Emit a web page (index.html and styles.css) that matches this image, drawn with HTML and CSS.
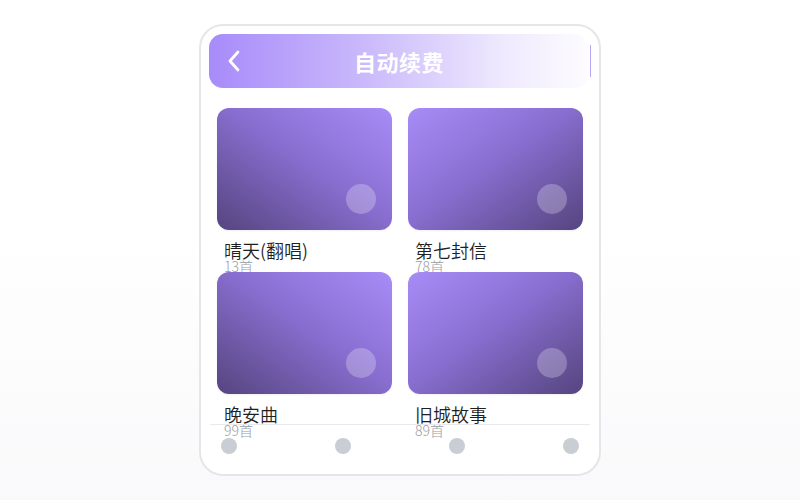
FILE: index.html
```html
<!DOCTYPE html>
<html lang="zh-CN">
<head>
  <meta charset="UTF-8" />
  <meta name="viewport" content="width=device-width, initial-scale=1.0"/>
  <title>自动续费</title>
  <link rel="stylesheet" href="styles.css">
</head>
<body>
  <div class="phone">
    <div class="header">
      <button class="back-btn" title="返回">
        <svg width="14" height="22" viewBox="0 0 14 22"><path d="M11 2 L3 11 L11 20" fill="none" stroke="#fff" stroke-width="2.8" stroke-linecap="round" stroke-linejoin="round"/></svg>
      </button>
      <div class="title">自动续费</div>
    </div>

    <div class="album-grid">
      <div class="album">
        <div class="cover cover-a"><span class="play-dot"></span></div>
        <div class="album-name">晴天(翻唱)</div>
        <div class="album-count">13首</div>
      </div>
      <div class="album">
        <div class="cover cover-b"><span class="play-dot"></span></div>
        <div class="album-name">第七封信</div>
        <div class="album-count">78首</div>
      </div>
      <div class="album">
        <div class="cover cover-a"><span class="play-dot"></span></div>
        <div class="album-name">晚安曲</div>
        <div class="album-count">99首</div>
      </div>
      <div class="album">
        <div class="cover cover-b"><span class="play-dot"></span></div>
        <div class="album-name">旧城故事</div>
        <div class="album-count">89首</div>
      </div>
    </div>

    <div class="tabbar">
      <span class="tab-dot"></span>
      <span class="tab-dot"></span>
      <span class="tab-dot"></span>
      <span class="tab-dot"></span>
    </div>
  </div>
</body>
</html>
```

FILE: styles.css
```css
* { margin: 0; padding: 0; box-sizing: border-box; }
body {
  font-family: "Noto Sans CJK SC", "Noto Sans", sans-serif;
  background: linear-gradient(180deg, #ffffff 45%, #f9f9fb);
  height: 100vh; overflow: hidden;
  display: flex; align-items: center; justify-content: center;
}
.phone { position: relative; width: 402px; height: 452px; background: #fff;
  border: 2px solid #e6e6ea; border-radius: 24px; padding: 8px; overflow: hidden;
}
.header { position: relative; height: 54px; margin-right: 2px; border-radius: 14px;
  background: linear-gradient(90deg, #a78bfa 0%, #c9b8fb 40%, #efeafe 78%, #fdfcff 100%);
  display: flex; align-items: center; justify-content: center;
}
.header::after { content: ""; position: absolute; right: -2px; top: 11px; bottom: 11px;
  width: 1px; background: #b8a4f4;
}
.back-btn { position: absolute; left: 18px; top: 16px; background: none; border: none;
  width: 14px; height: 22px; cursor: pointer; display: flex;
}
.title { color: #fff; font-size: 22px; font-weight: 700; letter-spacing: 0.5px; line-height: 1; }
.album-grid { display: grid; grid-template-columns: 175px 175px; grid-auto-rows: 148px;
  gap: 16px; padding: 20px 0 0; justify-content: center;
}
.album { min-width: 0; }
.cover { position: relative; height: 122px; border-radius: 12px;
  box-shadow: 0 1px 2px rgba(60,40,120,0.08);
}
.cover-a { background: linear-gradient(to top right, #55457f 0%, #8a6fd2 55%, #a88cf7 100%); }
.cover-b { background: linear-gradient(to bottom right, #a88cf7 0%, #8a6fd2 45%, #55457f 100%); }
.play-dot { position: absolute; right: 16px; bottom: 16px; width: 30px; height: 30px;
  border-radius: 50%; background: rgba(255,255,255,0.25);
}
.album-name { margin-top: 11px; padding-left: 7px; font-size: 18px; font-weight: 350;
  line-height: 18px; color: #1f1f1f;
}
.album-count { padding-left: 7px; font-size: 14px; font-weight: 300; line-height: 14px; color: #979ca6; }
.tabbar { position: absolute; left: 9px; right: 9px; top: 398px; border-top: 1px solid #e8e9ee;
  padding: 13px 11px 0; display: flex; justify-content: space-between;
}
.tab-dot { width: 16px; height: 16px; border-radius: 50%; background: #c9cdd4; }
```
